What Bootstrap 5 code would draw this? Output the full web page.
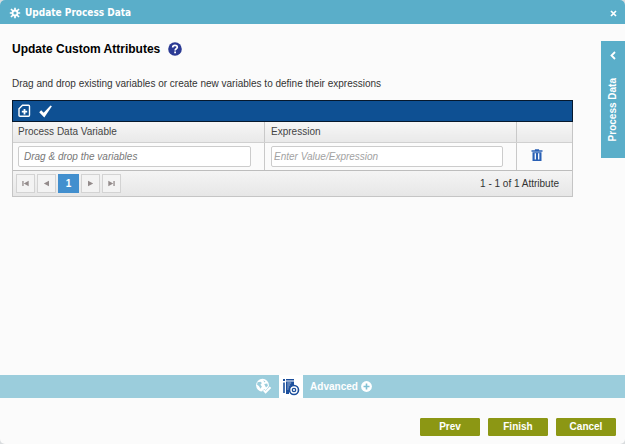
<!DOCTYPE html>
<html lang="en">
<head>
<meta charset="utf-8">
<meta name="viewport" content="width=device-width, initial-scale=1">
<title>Update Process Data</title>
<link href="https://cdn.jsdelivr.net/npm/bootstrap@5.3.0/dist/css/bootstrap.min.css" rel="stylesheet">
<style>
  html { background: #d9dcde; }
  body { font-family: "Liberation Sans", Arial, sans-serif; font-size: 10px; line-height: 12px; color: #333; background: transparent; }
  .dialog { background: #fbfbfb; border-radius: 5px; overflow: hidden; }
  .dialog-title { background: #5aaec9; color: #fff; height: 24px; padding: 2px 8px 0 9px; }
  .dialog-title h1 { font: bold 10px/14px "DejaVu Sans Condensed", "DejaVu Sans", sans-serif; }
  .plain { background: none; border: 0; padding: 0; color: inherit; display: flex; }
  .dialog-main { padding: 17px 52px 0 12px; }
  .dialog-main h2 { font-size: 12px; line-height: 16px; font-weight: bold; color: #000; }
  .intro { margin: 21px 0 10px; }
  .grid-tools { background: #0e5093; border: 1px solid #06182c; height: 22px; padding: 0 5px; gap: 8px; color: #fff; }
  .grid-frame { border: 1px solid #c5c5c5; border-top: 0; }
  .attr-table { table-layout: fixed; border-collapse: collapse; background: #fbfbfb; }
  .attr-table th { font-weight: normal; height: 20px; padding: 0 5px; background: linear-gradient(#f6f6f6, #e9e9e9); border-bottom: 1px solid #d0d0d0; color: #444; }
  .attr-table td { height: 28px; padding: 0 5px; }
  .attr-table td:last-child { padding-bottom: 2px; }
  .attr-table th + th, .attr-table td + td { border-left: 1px solid #c9c9c9; padding-left: 6px; }
  .attr-table input { display: block; height: 21px; font-size: 10px; line-height: 12px; font-style: italic; border: 1px solid #ccc; border-radius: 2px; padding: 0 5px; color: #555; background: #fff; }
  .attr-table input::placeholder { color: #777; opacity: 1; }
  .attr-table .expr { padding: 0 2px; }
  .attr-table .expr::placeholder { color: #a2a2a2; }
  .col-var { width: 45%; } .col-del { width: 10%; }
  .pager { height: 26px; padding: 0 13px 0 3px; border-top: 1px solid #bdbdbd; background: linear-gradient(#f4f4f4, #e7e7e7); gap: 2px; }
  .pager button { width: 19px; height: 19px; border: 1px solid #d3d3d3; background: #f3f3f3; padding: 0; color: #938b8b; display: flex; align-items: center; justify-content: center; }
  .pager button.current { width: 21px; background: #428fce; border-color: #428fce; color: #fff; font-weight: bold; }
  .side-tab { position: absolute; top: 41px; right: 0; width: 24px; height: 117px; background: #5aaec9; color: #fff; border: 0; padding: 10px 0 0; gap: 18px; font-weight: bold; line-height: 12px; }
  .side-tab span { writing-mode: vertical-rl; transform: rotate(180deg); }
  .steps { background: #9bcddc; height: 23px; color: #fff; gap: 7px; padding-left: 2px; }
  .steps .active-step { background: #fff; height: 23px; width: 24px; align-items: center; justify-content: center; }
  .steps .more { font-weight: bold; line-height: 14px; gap: 3px; align-items: center; }
  .dialog-foot { padding: 20px 9px 8px; gap: 8px; }
  .dialog-foot .btn { --bs-btn-bg: #8c9714; --bs-btn-color: #fff; --bs-btn-border-color: #8c9714; --bs-btn-hover-bg: #7b850f; --bs-btn-hover-color: #fff; --bs-btn-border-radius: 1px; --bs-btn-padding-y: 0; --bs-btn-padding-x: 0; width: 60px; height: 18px; font-size: 10px; line-height: 16px; font-weight: bold; }
</style>
<script src="https://cdn.jsdelivr.net/npm/bootstrap@5.3.0/dist/js/bootstrap.bundle.min.js" defer></script>
</head>
<body>
<div class="dialog d-flex flex-column min-vh-100 position-relative">
  <header class="dialog-title d-flex align-items-center">
    <svg class="me-1" width="12" height="12" viewBox="0 0 12 12" fill="none" stroke="#fff" aria-hidden="true"><circle cx="6" cy="6" r="2.5" stroke-width="1.8"/><path d="M6 .8v2.4M6 8.8v2.4M.8 6h2.4M8.8 6h2.4M2 2l2 2M8 8l2 2M2 10l2-2M8 4l2-2" stroke-width="1.7"/></svg>
    <h1 class="m-0 flex-grow-1">Update Process Data</h1>
    <button class="plain" type="button" aria-label="Close"><svg width="7" height="7" viewBox="0 0 7 7" stroke="#fff" stroke-width="1.7"><path d="M1 1l5 5M6 1L1 6"/></svg></button>
  </header>

  <main class="dialog-main flex-grow-1">
    <div class="d-flex align-items-center gap-2">
      <h2 class="m-0">Update Custom Attributes</h2>
      <button class="plain" type="button" aria-label="Help"><svg width="14" height="14" viewBox="0 0 14 14"><circle cx="7" cy="7" r="6.8" fill="#2b3a94"/><path d="M4.7 5.4C4.7 2.6 9.3 2.6 9.3 5.3C9.3 6.8 7.1 6.8 7.1 8.6" fill="none" stroke="#fff" stroke-width="1.7"/><path d="M6.2 9.6h1.8v1.7H6.2z" fill="#fff"/></svg></button>
    </div>
    <p class="intro">Drag and drop existing variables or create new variables to define their expressions</p>

    <div class="grid-tools d-flex align-items-center">
      <button class="plain" type="button" aria-label="Add attribute"><svg width="13" height="14" viewBox="0 0 13 14" fill="none" stroke="#fff" stroke-width="1.4"><path d="M4.5 1.2H10.5Q11.5 1.2 11.5 2.2V11.3Q11.5 12.3 10.5 12.3H2Q1 12.3 1 11.3V4.7Z"/><path d="M6.5 5v5.4M3.8 7.7h5.4" stroke-width="1.8"/></svg></button>
      <button class="plain" type="button" aria-label="Validate"><svg width="13" height="13" viewBox="0 0 13 13"><path d="M.2 7.2L2.2 5.2 4.7 7.8 11.5.6 12.9 1.3 5.3 12.4Z" fill="#fff"/></svg></button>
    </div>
    <div class="grid-frame">
      <table class="attr-table w-100">
        <colgroup><col class="col-var"><col><col class="col-del"></colgroup>
        <thead><tr><th scope="col">Process Data Variable</th><th scope="col">Expression</th><th scope="col" aria-label="Actions"></th></tr></thead>
        <tbody><tr>
          <td><div class="pe-2"><input class="w-100" type="text" aria-label="Process Data Variable" placeholder="Drag &amp; drop the variables"></div></td>
          <td><div class="pe-2"><input class="expr w-100" type="text" aria-label="Expression" placeholder="Enter Value/Expression"></div></td>
          <td><button class="plain ms-1 ps-1" type="button" aria-label="Delete"><svg width="12" height="12" viewBox="0 0 12 12" fill="#2960b5"><path d="M.5 1.3h3.4V.2h4.2v1.1h3.4v1.4H.5zM1.5 3.2h9V12h-9z"/><path d="M4.3 4.2v6.4M7.7 4.2v6.4" stroke="#fff" stroke-width="1.3"/></svg></button></td>
        </tr></tbody>
      </table>
      <nav class="pager d-flex align-items-center" aria-label="Pages">
        <button type="button" aria-label="First page"><svg width="7" height="7" viewBox="0 0 7 7" fill="currentColor"><path d="M.3 1h1.3v5H.3zM6.7.8v5.4L1.8 3.5z"/></svg></button>
        <button type="button" aria-label="Previous page"><svg width="7" height="7" viewBox="0 0 7 7" fill="currentColor"><path d="M6 .8v5.4L.8 3.5z"/></svg></button>
        <button class="current" type="button" aria-current="page">1</button>
        <button type="button" aria-label="Next page"><svg width="7" height="7" viewBox="0 0 7 7" fill="currentColor"><path d="M1 .8v5.4L6.2 3.5z"/></svg></button>
        <button type="button" aria-label="Last page"><svg width="7" height="7" viewBox="0 0 7 7" fill="currentColor"><path d="M5.4 1h1.3v5H5.4zM.3.8v5.4L5.2 3.5z"/></svg></button>
        <span class="ms-auto">1 - 1 of 1 Attribute</span>
      </nav>
    </div>
  </main>

  <nav class="steps d-flex align-items-center justify-content-center" aria-label="Steps">
    <button class="plain" type="button" aria-label="General"><svg width="17" height="17" viewBox="0 0 17 17"><circle cx="7.5" cy="7.2" r="6.4" fill="#fff"/><path d="M2.5 4.2L5.5 3.7 6.9 5.1 5.4 6.8 6.9 8.6 5.5 10.7 3.9 8.1 2.1 6.8ZM8.2 2.2L10.4 3.4 9.5 4.4ZM9.2 6L12.2 5.6 12.9 7.8 11 9.5Z" fill="#9bcddc"/><path d="M8.2 12.1L10.6 14.7 15.8 9.2" stroke="#9bcddc" stroke-width="3.3" fill="none"/><path d="M8.6 12.1L10.6 14.3 15.5 9.2" stroke="#fff" stroke-width="2" fill="none"/></svg></button>
    <button class="plain active-step" type="button" aria-label="Process data" aria-current="step"><svg width="18" height="18" viewBox="0 0 18 18" fill="#1c4f9c"><path d="M1 1h2v2H1zM4 1h8v1.5H4zM1.2 4.5h1.6V15H1.2zM4 3.5h8v5H9L7 11v5H4z"/><path d="M5.2 5h4M5.2 7h3M5.2 9h2M5.2 11h1.5" stroke="#fff" stroke-width=".6"/><circle cx="12" cy="12" r="4.5" fill="#fff" stroke="#1c4f9c" stroke-width="1.6"/><circle cx="12" cy="12" r="1.7" fill="none" stroke="#1c4f9c" stroke-width="1.3"/></svg></button>
    <button class="plain more" type="button">Advanced <svg width="11" height="11" viewBox="0 0 11 11"><circle cx="5.5" cy="5.5" r="5.4" fill="#fff"/><path d="M5.5 2.5v6M2.5 5.5h6" stroke="#7fc0d3" stroke-width="1.6"/></svg></button>
  </nav>

  <footer class="dialog-foot d-flex justify-content-end">
    <button class="btn" type="button">Prev</button>
    <button class="btn" type="button">Finish</button>
    <button class="btn" type="button">Cancel</button>
  </footer>

  <button class="side-tab d-flex flex-column align-items-center" type="button">
    <svg width="6" height="9" viewBox="0 0 6 9" fill="none" stroke="#fff" stroke-width="1.8"><path d="M5 1L1.5 4.5 5 8"/></svg>
    <span>Process Data</span>
  </button>
</div>
</body>
</html>
